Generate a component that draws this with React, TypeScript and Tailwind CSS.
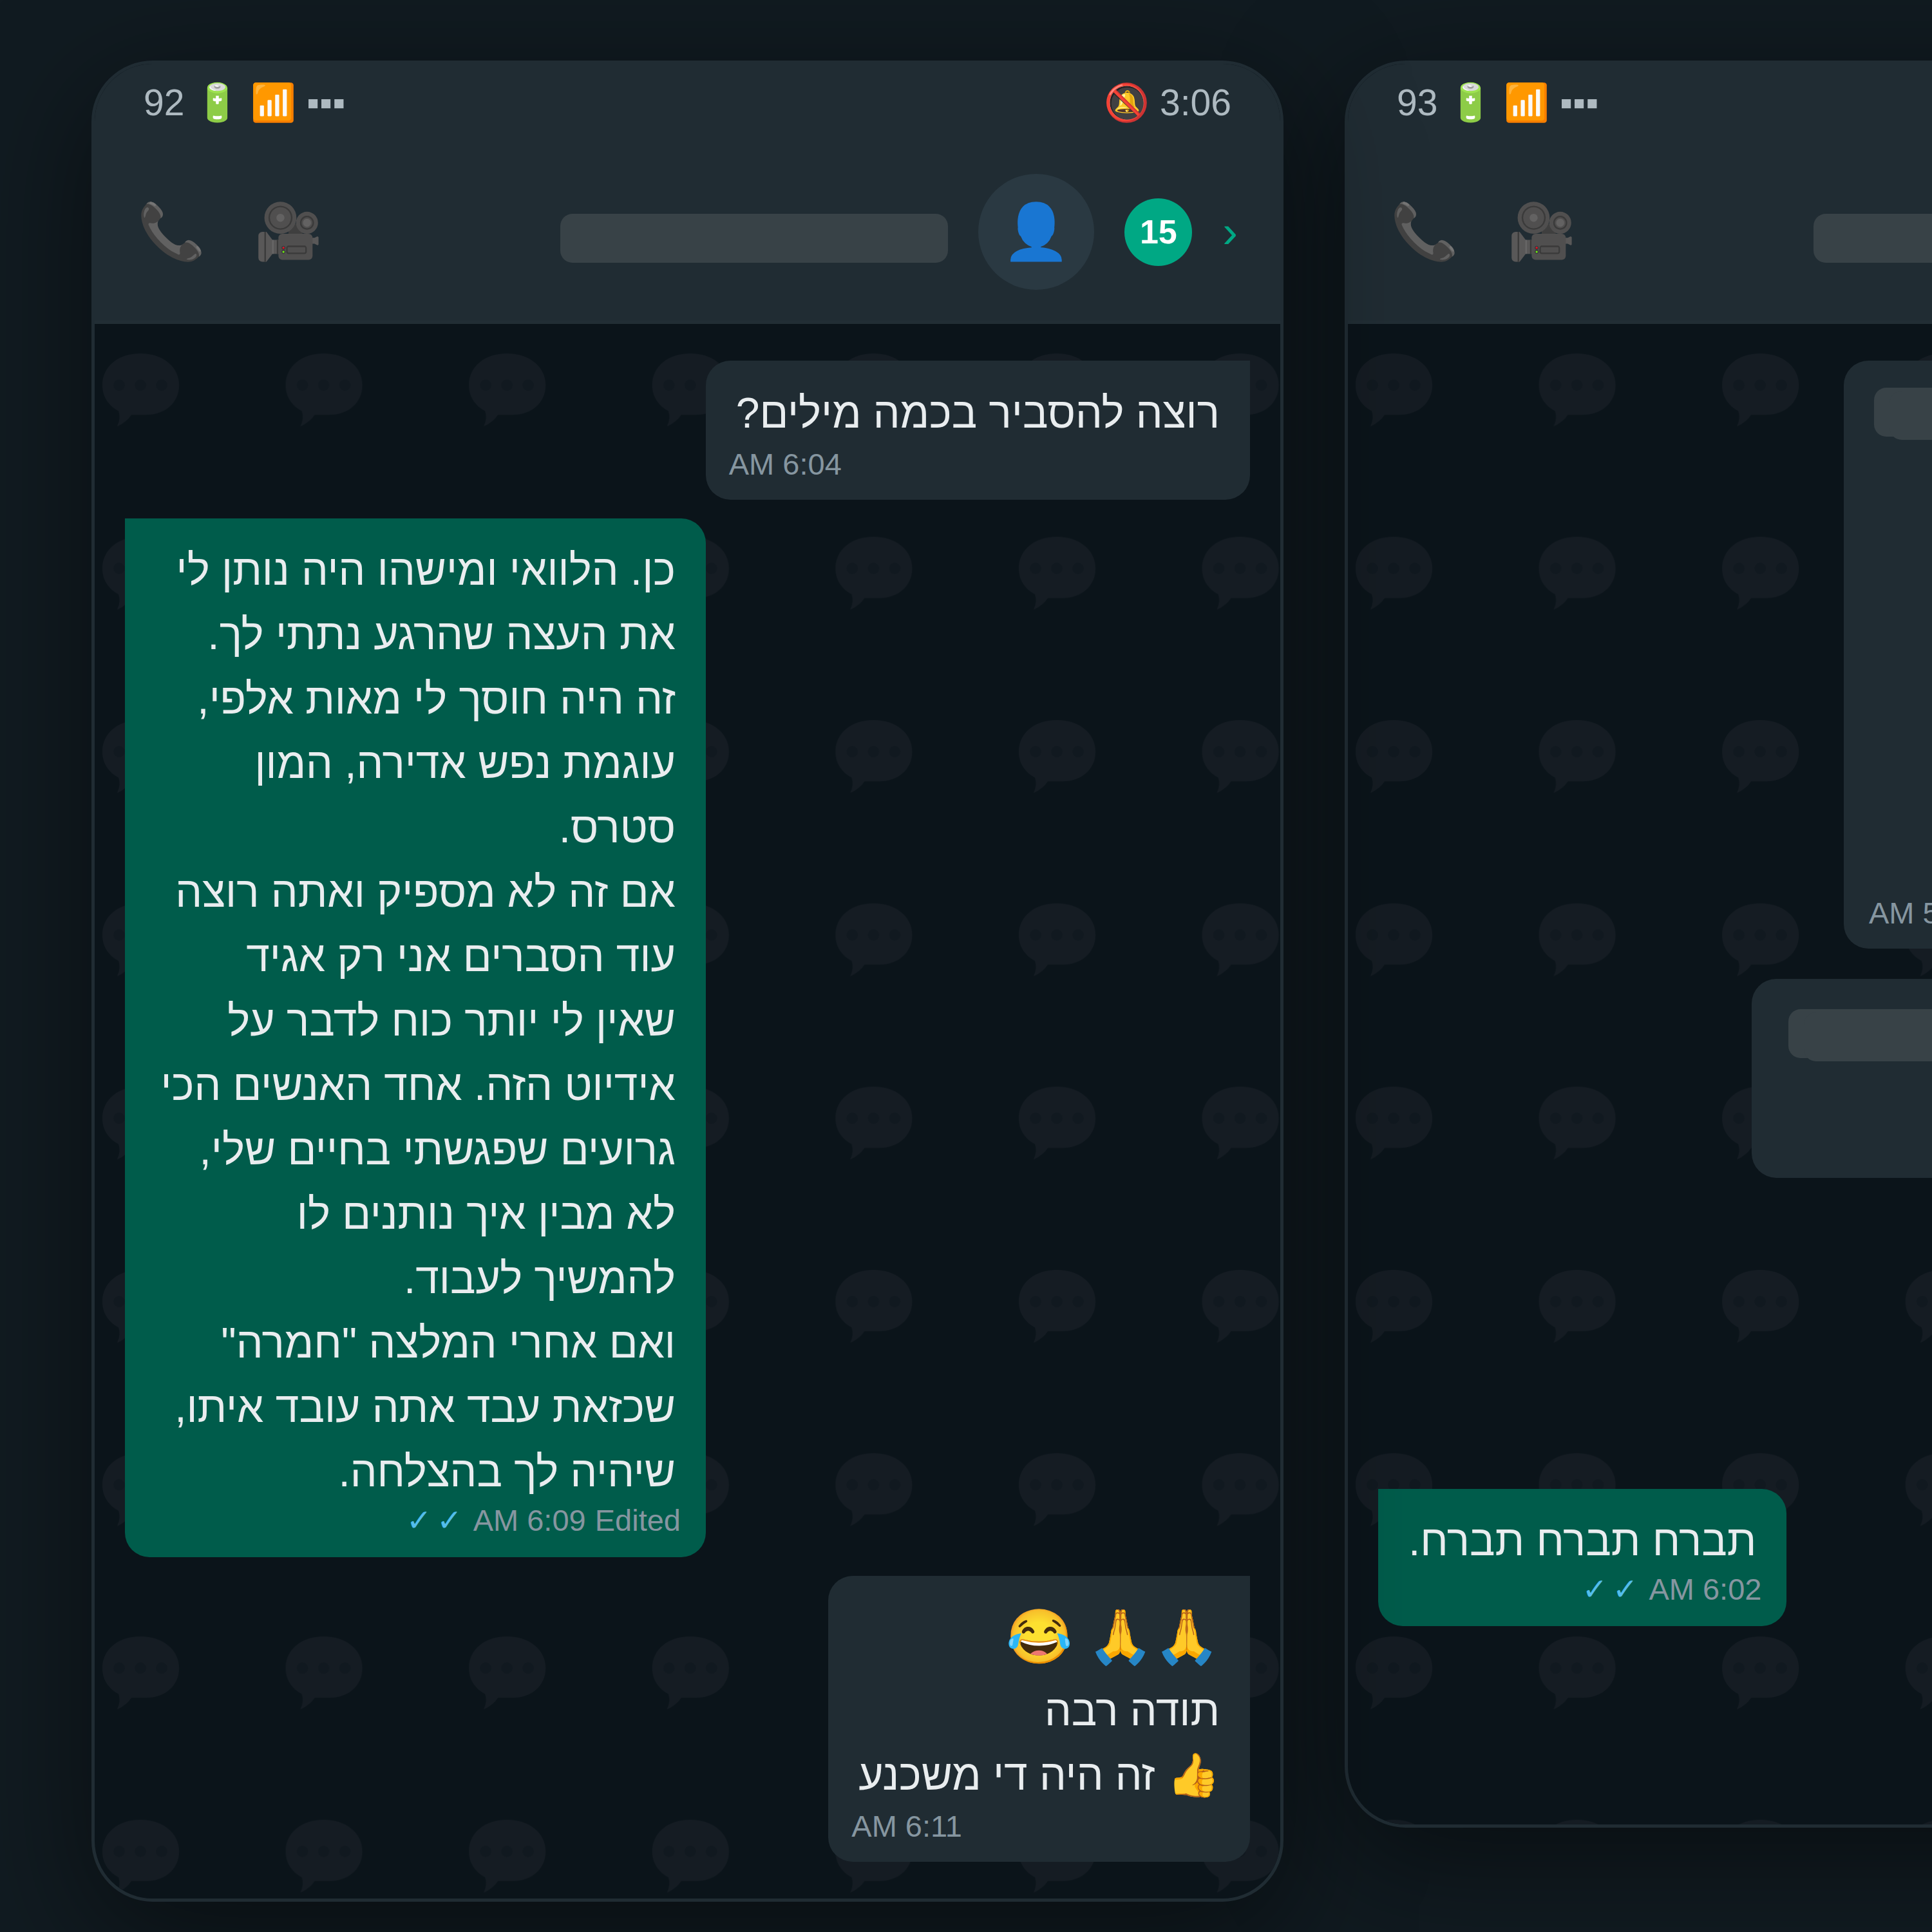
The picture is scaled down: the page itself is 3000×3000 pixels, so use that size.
import { type ReactNode } from 'react';

type PhoneProps = {
    battery: number;
    time: string;
    unread: number;
    children: ReactNode;
};

/* Censored text, two overlapping strokes */
function Redacted() {
    return (
        <div>
            <span className="block h-[76px] rounded-[19px] bg-[#384247]" />
            <span className="-mt-[71px] me-[24px] block h-[76px] rounded-[19px] bg-[#384247]" />
        </div>
    );
}

/* Faint speech bubbles behind the conversation */
function Wallpaper({ id }: { id: string }) {
    return (
        <svg className="absolute inset-0 -z-10 h-full w-full" aria-hidden="true">
            <defs>
                <pattern id={id} width="284.6" height="284.6" patternUnits="userSpaceOnUse">
                    <path
                        d="M71 46C105 46 131 66 131 95C131 123 108 141 80 141H57Q50 152 35 159Q41 146 37 135C22 127 12 113 12 95C12 66 37 46 71 46Z"
                        fill="#151c23"
                    />
                    <circle cx="38" cy="95" r="9" fill="#111920" />
                    <circle cx="71" cy="95" r="9" fill="#111920" />
                    <circle cx="104" cy="95" r="9" fill="#111920" />
                </pattern>
            </defs>
            <rect width="100%" height="100%" fill={`url(#${id})`} />
        </svg>
    );
}

function Phone({ battery, time, unread, children }: PhoneProps) {
    return (
        <section className="w-[1851px] shrink-0 overflow-hidden rounded-[95px] border-[5px] border-[#202c33] bg-[#0b141a] shadow-[0_47px_190px_rgba(0,0,0,0.5)]">
            <header className="bg-[#202c33]">
                {/* Status bar */}
                <div className="flex items-center justify-between px-[76px] pt-[22px] text-[57px] leading-[76px] text-[#aebac1]">
                    <span>{time} 🔕</span>
                    <span>▪▪▪ 📶 🔋 {battery}</span>
                </div>

                {/* Contact */}
                <div className="flex items-center justify-between border-b-[5px] border-[#222e35] px-[66px] pt-[73px] pb-[48px]">
                    <div className="flex items-center gap-[47px]">
                        <a href="#chats" aria-label="Back" className="text-[71px] leading-[104px] text-[#00a884]">
                            ‹
                        </a>
                        <span className="flex h-[105px] w-[105px] items-center justify-center rounded-full bg-[#00a884] text-[52px] font-bold text-white">
                            {unread}
                        </span>
                        <span className="flex h-[180px] w-[180px] items-center justify-center rounded-full bg-[#2a3942] text-[85px]">
                            👤
                        </span>
                        <span className="mt-[20px] block h-[76px] w-[602px] rounded-[19px] bg-[#384247]" />
                    </div>
                    <div className="flex gap-[76px] text-[85px] leading-[104px]">
                        <button type="button" aria-label="Video call">🎥</button>
                        <button type="button" aria-label="Voice call">📞</button>
                    </div>
                </div>
            </header>

            <main className="relative isolate flex flex-col items-start gap-[29px] px-[47px] py-[57px]">
                <Wallpaper id={`wallpaper-${battery}`} />
                {children}
            </main>
        </section>
    );
}

function Incoming({ time, children }: { time: string; children: ReactNode }) {
    return (
        <article className="rounded-[38px] rounded-tr-none bg-[#202c33] px-[47px] pt-[31px] pb-[25px] text-[66px] leading-[100px]">
            {children}
            <time className="-mx-[11px] block text-left text-[47px] leading-[60px] text-[#8696a0]">{time}</time>
        </article>
    );
}

function Outgoing({ time, edited, children }: { time: string; edited?: boolean; children: ReactNode }) {
    return (
        <article className="rounded-[38px] rounded-tl-none bg-[#005c4b] px-[47px] pt-[30px] pb-[31px] text-[66px] leading-[100px]">
            {children}
            <div className="-mx-[8px] flex gap-[14px] text-[47px] leading-[52px] text-[#8696a0]">
                {edited && <span>Edited</span>}
                <time>{time}</time>
                <span className="flex gap-[8px] ps-[3px] font-['DejaVu_Sans',sans-serif] text-[#53bdeb]">
                    <span>✓</span>
                    <span>✓</span>
                </span>
            </div>
        </article>
    );
}

export default function App() {
    return (
        <div
            dir="rtl"
            className="min-h-screen overflow-hidden bg-[#111b21] px-[142px] py-[94px] font-['Liberation_Sans',sans-serif] text-[#e9edef]"
        >
            <div className="flex items-start gap-[95px]" dir="ltr">
                <div dir="rtl" className="relative z-10">
                    <Phone battery={92} time="3:06" unread={15}>
                        <Incoming time="6:04 AM">רוצה להסביר בכמה מילים?</Incoming>
                        <div className="self-end">
                            <Outgoing time="6:09 AM" edited>
                                <p className="w-[808px]">
                                    כן. הלוואי ומישהו היה נותן לי את העצה שהרגע נתתי לך.
                                    <br />
                                    זה היה חוסך לי מאות אלפי, עוגמת נפש אדירה, המון סטרס.
                                    <br />
                                    אם זה לא מספיק ואתה רוצה עוד הסברים אני רק אגיד שאין לי יותר כוח לדבר על אידיוט הזה. אחד
                                    האנשים הכי גרועים שפגשתי בחיים שלי, לא מבין איך נותנים לו להמשיך לעבוד.
                                    <br />
                                    ואם אחרי המלצה "חמרה" שכזאת עבד אתה עובד איתו, שיהיה לך בהצלחה.
                                </p>
                            </Outgoing>
                        </div>
                        <Incoming time="6:11 AM">
                            <p className="text-[83px] leading-[128px]">🙏🙏 😂</p>
                            <p>תודה רבה</p>
                            <p>👍 זה היה די משכנע</p>
                        </Incoming>
                    </Phone>
                </div>

                <div dir="rtl">
                    <Phone battery={93} time="3:05" unread={15}>
                        <article className="rounded-[38px] rounded-tr-none bg-[#202c33] px-[47px] pt-[42px] pb-[24px]">
                            <div className="w-[930px]">
                                <Redacted />
                            </div>
                            <time className="-mx-[8px] mt-[704px] block text-left text-[47px] leading-[62px] text-[#8696a0]">
                                5:58 AM
                            </time>
                        </article>
                        <article className="mt-[18px] rounded-[38px] bg-[#202c33] px-[57px] pt-[47px] pb-[181px]">
                            <div className="w-[1053px]">
                                <Redacted />
                            </div>
                        </article>
                        <div className="mt-[454px] self-end">
                            <Outgoing time="6:02 AM">תברח תברח תברח.</Outgoing>
                        </div>
                        <div className="h-[222px]" />
                    </Phone>
                </div>
            </div>
        </div>
    );
}
